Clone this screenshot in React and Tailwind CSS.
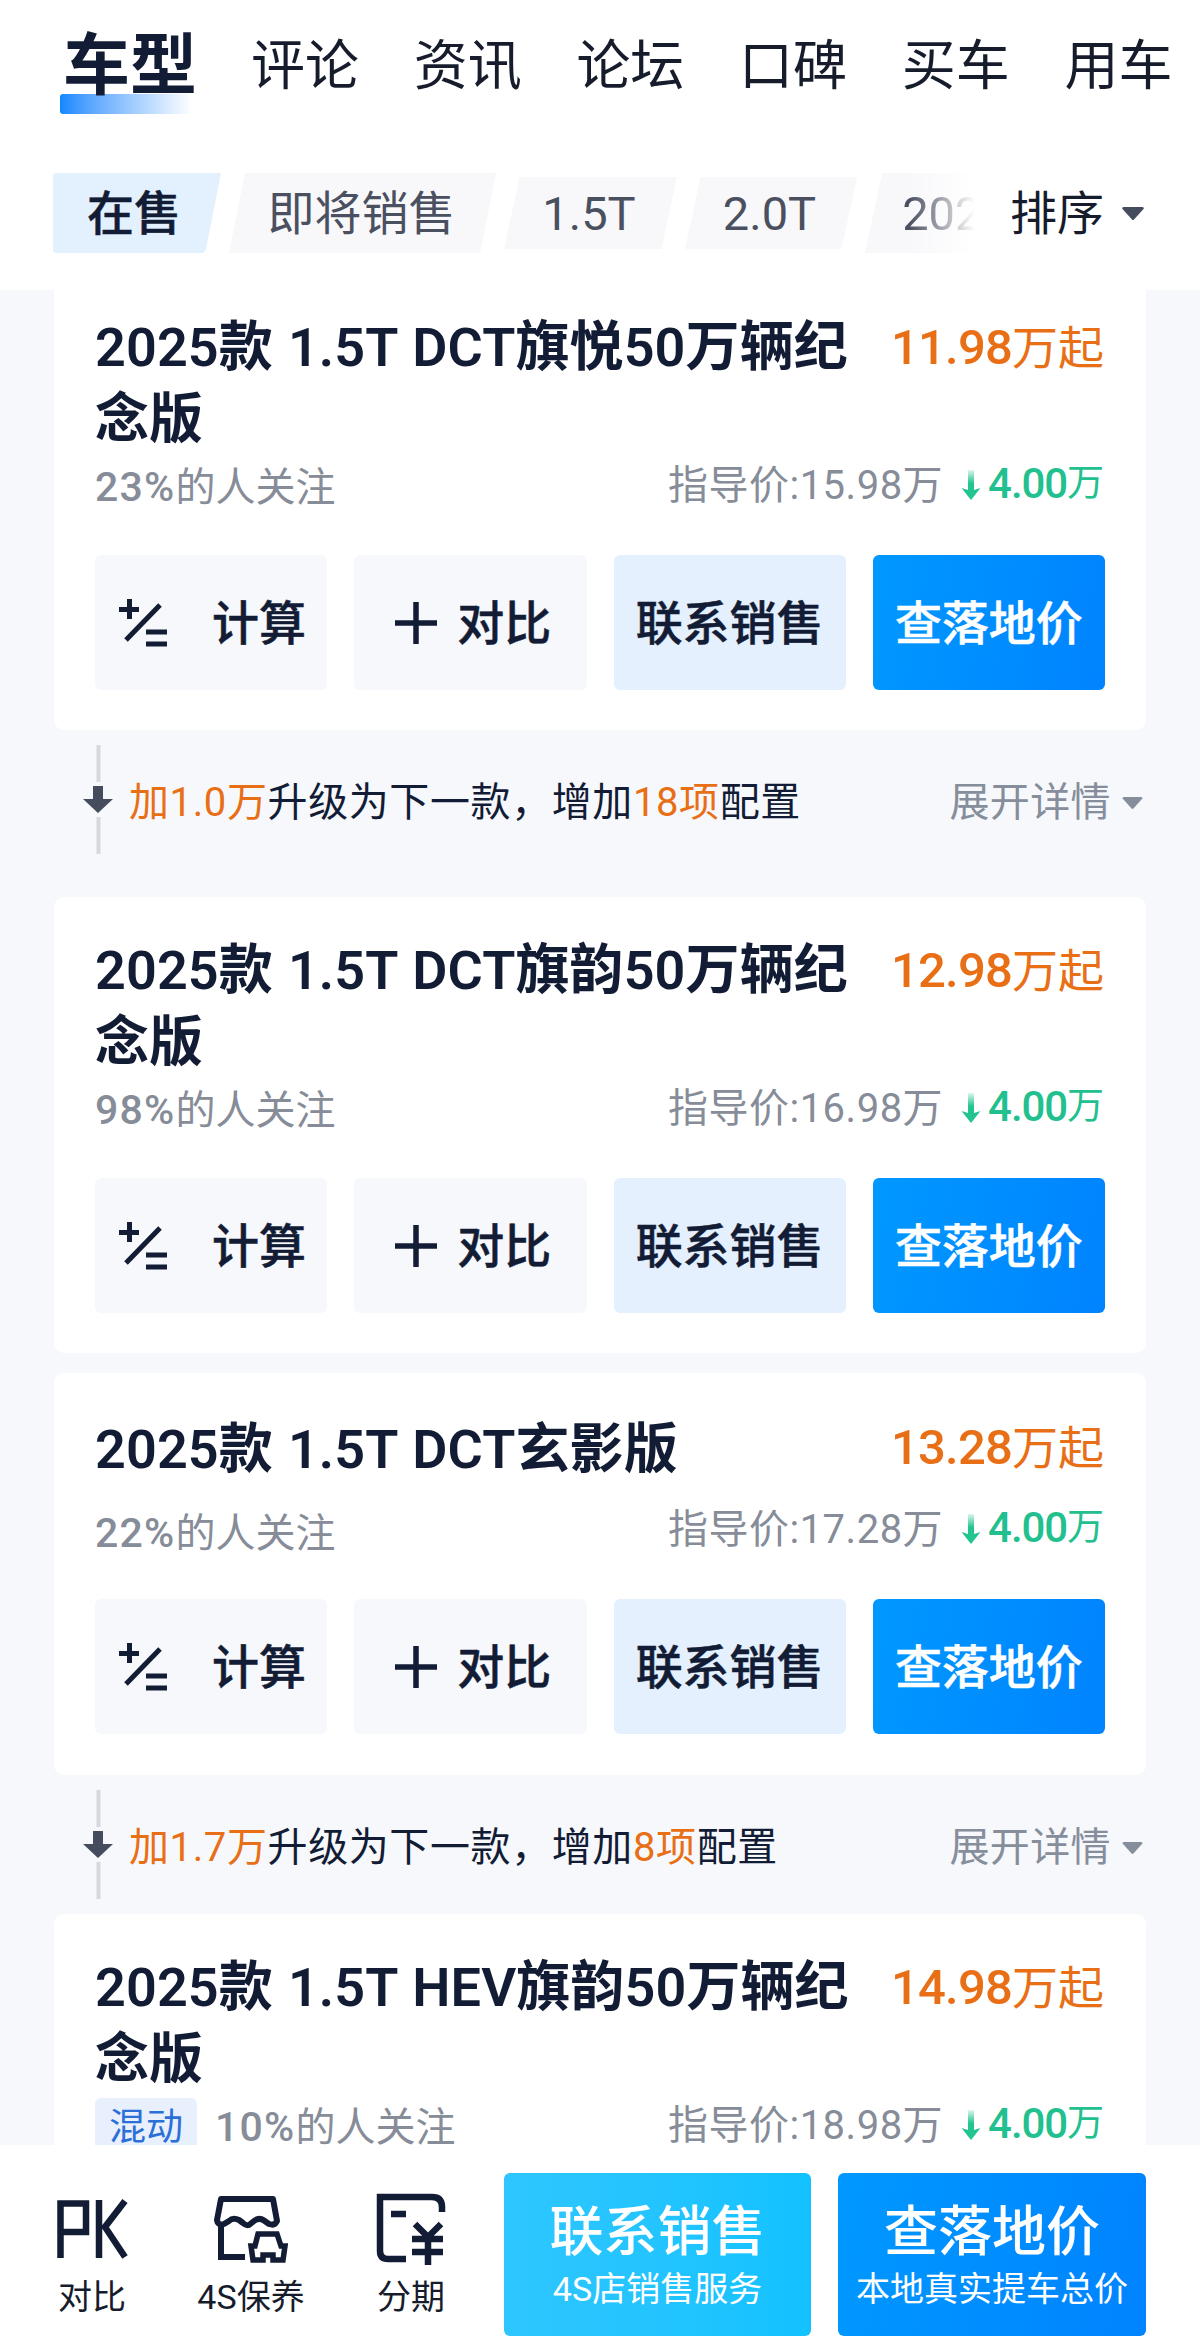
import React from "react";

const FONT = 'font-[Roboto,"Noto_Sans_CJK_SC",sans-serif]';

const CARDS = [
  { title: "2025款 1.5T DCT旗悦50万辆纪念版", price: "11.98", follow: "23%", guide: "15.98", drop: "4.00", short: false },
  { title: "2025款 1.5T DCT旗韵50万辆纪念版", price: "12.98", follow: "98%", guide: "16.98", drop: "4.00", short: false },
  { title: "2025款 1.5T DCT玄影版", price: "13.28", follow: "22%", guide: "17.28", drop: "4.00", short: true },
  { title: "2025款 1.5T HEV旗韵50万辆纪念版", price: "14.98", follow: "10%", guide: "18.98", drop: "4.00", short: false, tag: "混动" },
];

function CalcIcon() {
  return (
    <svg width="50" height="50" viewBox="0 0 50 50" fill="none" stroke="#131c35" strokeWidth="5" className="shrink-0">
      <path d="M0 11.500H20M10.500 1V21" />
      <path d="M41 7L7 42" />
      <path d="M27 34H48M27 46H48" />
    </svg>
  );
}

function PlusIcon() {
  return (
    <svg width="42" height="42" viewBox="0 0 42 42" fill="none" stroke="#131c35" strokeWidth="5.500" className="shrink-0">
      <path d="M0 21H42M21 0V42" />
    </svg>
  );
}

function DropArrow({ id }) {
  return (
    <svg width="20" height="30" viewBox="0 0 20 30" className="shrink-0">
      <defs>
        <linearGradient id={id} x1="0" y1="0" x2="0" y2="1">
          <stop offset="0" stopColor="#22c490" stopOpacity="0.15" />
          <stop offset="0.6" stopColor="#22c490" />
        </linearGradient>
      </defs>
      <rect x="7" y="0" width="6" height="22" fill={`url(#${id})`} />
      <path d="M0.500 18L7 20H13L19.500 18L10 30Z" fill="#22c490" />
    </svg>
  );
}

function Caret({ className, width = 22, height = 13 }) {
  return (
    <svg width={width} height={height} viewBox="0 0 22 13" className={className}>
      <path d="M1.500 0H20.500Q22.500 0.500 21.500 2L12 12.500Q11 13.500 10 12.500L0.500 2Q-0.500 0.500 1.500 0Z" fill="currentColor" />
    </svg>
  );
}

function Card({ data, index }) {
  return (
    <article className={`mx-[54px] shrink-0 rounded-[10px] bg-white pl-[41px] pr-[41px] ${data.short ? "h-[402px] pt-[41px]" : "h-[456px] pt-[38px]"}`}>
      <div className={`flex justify-between ${data.short ? "h-[86px]" : "h-[142px]"}`}>
        <h2 className="w-[765px] text-[54px] font-semibold leading-[72px] tracking-[0.1px] text-[#131c35] [word-spacing:1.500px]">{data.title}</h2>
        <div className={`mr-[1px] flex items-center whitespace-nowrap text-[#e86f16] ${data.short ? "h-[68px]" : "h-[72px]"}`}>
          <span className="text-[49px] font-medium tracking-[-0.8px]">{data.price}</span>
          <span className="text-[46px]">万起</span>
        </div>
      </div>
      <div className="flex h-[66px] items-center justify-between text-[40px] text-[#868c98]">
        <div className="flex items-center pt-[2px]">
          {data.tag && (
            <span className="mr-[18px] flex h-[60px] w-[102px] items-center justify-center rounded-[6px] bg-[#e8effd] text-[37px] text-[#2b6fd8]">{data.tag}</span>
          )}
          <span className="text-[41px] font-medium tracking-[1.2px]">{data.follow}</span>
          <span>的人关注</span>
        </div>
        <div className={`mr-[1px] flex items-center ${data.short ? "mt-[-6px]" : "mt-[-2px]"}`}>
          <span className="tracking-[0.5px]">指导价:{data.guide}万</span>
          <span className="-mt-[3px] ml-[18px] mr-[7px] flex"><DropArrow id={`drop-${index}`} /></span>
          <span className="-mt-[5px] flex items-center text-[#22c08e]">
            <span className="text-[42px] font-medium tracking-[-1.1px]">{data.drop}</span>
            <span className="text-[37px]">万</span>
          </span>
        </div>
      </div>
      <div className={`grid grid-cols-4 gap-[27px] text-[47px] font-medium text-[#131c35] [-webkit-text-stroke:0.500px] ${data.short ? "mt-[33px]" : "mt-[35px]"}`}>
        <button className="flex h-[135px] items-center rounded-[6px] bg-[#f7f8fc] pl-[24px]">
          <CalcIcon />
          <span className="ml-[43px] pt-[3px]">计算</span>
        </button>
        <button className="flex h-[135px] items-center rounded-[6px] bg-[#f7f8fc] pl-[41px]">
          <PlusIcon />
          <span className="ml-[20px] pt-[3px]">对比</span>
        </button>
        <button className="flex h-[135px] items-center justify-center rounded-[6px] bg-[#e4f0fe] pt-[4px]">联系销售</button>
        <button className="flex h-[135px] items-center justify-center rounded-[6px] bg-linear-100 from-[#0098ff] to-[#0083ff] pt-[4px] text-white">查落地价</button>
      </div>
    </article>
  );
}

function Upgrade({ add, count, className }) {
  return (
    <div className={`flex shrink-0 items-start pl-[83px] pr-[57px] ${className}`}>
      <svg width="30" height="109" viewBox="0 0 30 109" className="shrink-0">
        <path d="M15.500 0V37M15.500 72V109" stroke="#d6d8de" strokeWidth="4" />
        <path d="M10 41H20V54H30L15 68L0 54H10Z" fill="#454c5e" />
      </svg>
      <div className="ml-[16px] flex h-[115px] flex-1 items-center justify-between text-[40px]">
        <p className="tracking-[0.6px] text-[#131c35]">
          <span className="text-[#e86f16]">加{add}万</span>升级为下一款，增加<span className="text-[#e86f16]">{count}项</span>配置
        </p>
        <div className="flex items-center gap-[11px] text-[#868e9b]">
          <span className="tracking-[0.4px]">展开详情</span>
          <Caret width={21} height={12} />
        </div>
      </div>
    </div>
  );
}

function Chip({ children, shape, className }) {
  return (
    <div className={`relative flex shrink-0 items-center justify-center text-[47px] ${className}`}>
      <svg className="absolute inset-0 h-full w-full" viewBox="0 0 100 100" preserveAspectRatio="none">
        <path d={shape} fill="currentColor" />
      </svg>
      <span className="relative pt-[2px] text-[#4a5060]">{children}</span>
    </div>
  );
}

function PkIcon() {
  return (
    <svg width="72" height="60" viewBox="0 0 72 60" fill="none" stroke="#131c35" strokeWidth="6.500">
      <path d="M4.500 59V4.500H30V33H4.500" />
      <path d="M43 1V59M69 2L49 28L69 58" />
    </svg>
  );
}

function ShopIcon() {
  return (
    <svg width="74" height="68" viewBox="0 0 74 68" fill="none" stroke="#131c35" strokeWidth="6">
      <path d="M7 4H59L63 26Q61 31 55 29L50 25.500Q45 22 40 26L35 30Q32 31 29 28L25 25Q19 22 15 26L10 29Q4 31 3 25Z" strokeLinejoin="round" />
      <path d="M7 28V62H31" />
      <path d="M44 39H63L67 51H71L69 65H59V60H49V65H39L37 51H41Z" strokeWidth="5.500" />
    </svg>
  );
}

function InstallmentIcon() {
  return (
    <svg width="70" height="72" viewBox="0 0 70 72" fill="none" stroke="#131c35" strokeWidth="6.500">
      <path d="M66 19V14Q66 4 56 4H4V58Q4 66 12 66H30" />
      <path d="M15 21H30M39 31L52 44L65 31M52 42V72M36 46H67M36 59H67" />
    </svg>
  );
}

export default function App() {
  return (
    <div className={`flex h-[2350px] w-[1200px] flex-col overflow-hidden bg-[#f6f8fc] ${FONT}`}>
      <header className="relative z-10 h-[290px] shrink-0 bg-white">
        <nav className="flex h-[132px] items-center whitespace-nowrap pl-[63px] text-[54px] text-[#161c2c]">
          <div className="relative mr-[54px] text-[67px] font-semibold leading-[80px] text-[#131c35]">
            <div className="absolute -left-[3px] top-[68px] h-[20px] w-[132px] rounded-[3px] bg-linear-to-r from-[#0a88ff] to-white" />
            <span className="relative">车型</span>
          </div>
          <div className="flex gap-[54.700px]">
            <span>评论</span><span>资讯</span><span>论坛</span><span>口碑</span><span>买车</span><span>用车</span>
          </div>
        </nav>
        <div className="mt-[41px] flex h-[80px] items-center pl-[53px]">
          <div className="flex h-[80px] w-[922px] shrink-0 items-center overflow-hidden">
            <Chip shape="M2 0H100L91 96Q90 100 88 100H2Q0 100 0 96V4Q0 0 2 0Z" className="h-[80px] w-[168px] pr-[6px] font-medium text-[#e3f1fe] [&>span]:text-[#131c35] [&>span]:[-webkit-text-stroke:0.500px]">在售</Chip>
            <Chip shape="M6 0H100L94 100H0Z" className="ml-[8px] h-[80px] w-[267px] pr-[2px] text-[#f8f8fb]">即将销售</Chip>
            <Chip shape="M9 0H100L91 100H0Z" className="ml-[8px] h-[72px] w-[173px] pr-[3px] text-[#f8f8fb]">1.5T</Chip>
            <Chip shape="M9 0H100L91 100H0Z" className="ml-[8px] h-[72px] w-[172px] pr-[3px] text-[#f8f8fb]">2.0T</Chip>
            <div className="ml-[8px] w-[110px] overflow-hidden mask-r-from-40% mask-r-to-100%">
              <Chip shape="M9 0H100L91 100H0Z" className="h-[80px] w-[190px] pr-[10px] text-[#f8f8fb]">2025</Chip>
            </div>
          </div>
          <span className="ml-[35px] pt-[3px] text-[47px] text-[#161c2c]">排序</span>
          <Caret className="ml-[18px] text-[#454c5e]" />
        </div>
      </header>
      <main className="-mt-[16px] flex h-[1871px] shrink-0 flex-col overflow-hidden">
        <Card data={CARDS[0]} index={0} />
        <Upgrade add="1.0" count="18" className="h-[167px] pt-[15px]" />
        <Card data={CARDS[1]} index={1} />
        <div className="h-[20px] shrink-0" />
        <Card data={CARDS[2]} index={2} />
        <Upgrade add="1.7" count="8" className="h-[139px] pt-[15px]" />
        <Card data={CARDS[3]} index={3} />
      </main>
      <footer className="flex h-[205px] shrink-0 bg-white pt-[28px] text-[#161c2c]">
        <div className="flex w-[504px] pl-[11px] pt-[18px] text-[34px]">
          <div className="flex w-[162px] flex-col items-center">
            <div className="flex h-[76px] items-center"><PkIcon /></div>
            <span className="mt-[5px] leading-[50px]">对比</span>
          </div>
          <div className="flex w-[156px] flex-col items-center">
            <div className="flex h-[76px] items-center"><ShopIcon /></div>
            <span className="mt-[5px] leading-[50px]">4S保养</span>
          </div>
          <div className="flex w-[164px] flex-col items-center">
            <div className="flex h-[76px] items-center"><InstallmentIcon /></div>
            <span className="mt-[5px] leading-[50px]">分期</span>
          </div>
        </div>
        <button className="flex h-[163px] w-[307px] flex-col items-center rounded-[6px] bg-linear-to-r from-[#2ec6ff] to-[#12c2ff] pt-[26px] text-white">
          <span className="text-[54px] font-medium leading-[68px]">联系销售</span>
          <span className="text-[34px] leading-[44px]">4S店销售服务</span>
        </button>
        <button className="ml-[27px] flex h-[163px] w-[308px] flex-col items-center rounded-[6px] bg-linear-100 from-[#0098ff] to-[#0083ff] pt-[26px] text-white">
          <span className="text-[54px] font-medium leading-[68px]">查落地价</span>
          <span className="text-[34px] leading-[44px]">本地真实提车总价</span>
        </button>
      </footer>
    </div>
  );
}
